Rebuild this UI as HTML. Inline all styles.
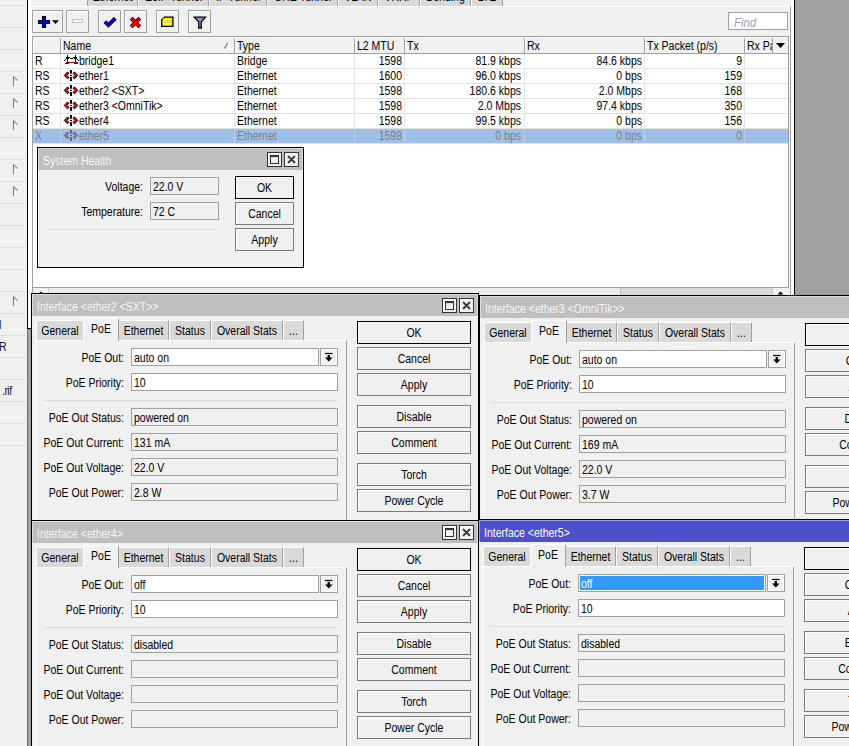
<!DOCTYPE html><html><head><meta charset="utf-8"><style>
*{margin:0;padding:0;box-sizing:content-box}
html,body{width:849px;height:746px;overflow:hidden;position:relative;background:#a0a0a0}
div{position:absolute}
.t{font-family:"Liberation Sans",sans-serif;font-size:12px;line-height:13px;white-space:pre;color:#000;height:13px;transform:scaleX(0.875)}
.btn{border:1px solid #777;background:#f0f0f0;box-shadow:inset 1px 1px 0 #fff}
</style></head><body>
<div style="left:0px;top:0px;width:27px;height:746px;background:#f0f0f0"></div>
<div style="left:0px;top:5px;width:25px;height:1px;background:#dedede"></div>
<div style="left:0px;top:27px;width:25px;height:1px;background:#dedede"></div>
<div style="left:0px;top:49px;width:25px;height:1px;background:#dedede"></div>
<div style="left:0px;top:71px;width:25px;height:1px;background:#dedede"></div>
<div style="left:0px;top:93px;width:25px;height:1px;background:#dedede"></div>
<div style="left:0px;top:115px;width:25px;height:1px;background:#dedede"></div>
<div style="left:0px;top:137px;width:25px;height:1px;background:#dedede"></div>
<div style="left:0px;top:159px;width:25px;height:1px;background:#dedede"></div>
<div style="left:0px;top:181px;width:25px;height:1px;background:#dedede"></div>
<div style="left:0px;top:203px;width:25px;height:1px;background:#dedede"></div>
<div style="left:0px;top:225px;width:25px;height:1px;background:#dedede"></div>
<div style="left:0px;top:247px;width:25px;height:1px;background:#dedede"></div>
<div style="left:0px;top:269px;width:25px;height:1px;background:#dedede"></div>
<div style="left:0px;top:291px;width:25px;height:1px;background:#dedede"></div>
<div style="left:0px;top:313px;width:25px;height:1px;background:#dedede"></div>
<div style="left:0px;top:335px;width:25px;height:1px;background:#dedede"></div>
<div style="left:0px;top:357px;width:25px;height:1px;background:#dedede"></div>
<div style="left:0px;top:379px;width:25px;height:1px;background:#dedede"></div>
<div style="left:0px;top:401px;width:25px;height:1px;background:#dedede"></div>
<div style="left:0px;top:423px;width:25px;height:1px;background:#dedede"></div>
<div style="left:0px;top:445px;width:25px;height:1px;background:#dedede"></div>
<svg style="position:absolute;left:12px;top:76px" width="8" height="11"><path d="M5.6 4.6 L1.6 9.2" stroke="#fff" stroke-width="1"/><path d="M1.5 0.3 V10 M1.5 0.6 L5.6 4.6" stroke="#808080" stroke-width="1.1"/></svg>
<svg style="position:absolute;left:12px;top:98px" width="8" height="11"><path d="M5.6 4.6 L1.6 9.2" stroke="#fff" stroke-width="1"/><path d="M1.5 0.3 V10 M1.5 0.6 L5.6 4.6" stroke="#808080" stroke-width="1.1"/></svg>
<svg style="position:absolute;left:12px;top:120px" width="8" height="11"><path d="M5.6 4.6 L1.6 9.2" stroke="#fff" stroke-width="1"/><path d="M1.5 0.3 V10 M1.5 0.6 L5.6 4.6" stroke="#808080" stroke-width="1.1"/></svg>
<svg style="position:absolute;left:12px;top:164px" width="8" height="11"><path d="M5.6 4.6 L1.6 9.2" stroke="#fff" stroke-width="1"/><path d="M1.5 0.3 V10 M1.5 0.6 L5.6 4.6" stroke="#808080" stroke-width="1.1"/></svg>
<svg style="position:absolute;left:12px;top:186px" width="8" height="11"><path d="M5.6 4.6 L1.6 9.2" stroke="#fff" stroke-width="1"/><path d="M1.5 0.3 V10 M1.5 0.6 L5.6 4.6" stroke="#808080" stroke-width="1.1"/></svg>
<svg style="position:absolute;left:12px;top:296px" width="8" height="11"><path d="M5.6 4.6 L1.6 9.2" stroke="#fff" stroke-width="1"/><path d="M1.5 0.3 V10 M1.5 0.6 L5.6 4.6" stroke="#808080" stroke-width="1.1"/></svg>
<div class="t" style="left:-1px;top:319px;transform-origin:0 0;color:#101040">l</div>
<div class="t" style="left:-1px;top:341px;transform-origin:0 0;color:#101040">R</div>
<div class="t" style="left:1.5px;top:385px;transform-origin:0 0;color:#101040;letter-spacing:-0.6px">.rif</div>
<div style="left:27px;top:0px;width:1px;height:329px;background:#000"></div>
<div style="left:27px;top:329px;width:1px;height:417px;background:#707070"></div>
<div style="left:28px;top:0px;width:766px;height:328px;background:#fff"></div>
<div style="left:794px;top:0px;width:1px;height:329px;background:#000"></div>
<div style="left:27px;top:328px;width:768px;height:1px;background:#000"></div>
<div style="left:31px;top:0px;width:760px;height:328px;background:#f0f0f0"></div>
<div style="left:87px;top:-10px;width:50px;height:16px;background:#d9d9d9;border-left:1px solid #a0a0a0"></div>
<div style="left:137px;top:-10px;width:1px;height:16px;background:#a0a0a0"></div>
<div class="t" style="left:37px;width:151px;text-align:center;top:-8.8px;transform-origin:50% 0;">Ethernet</div>
<div style="left:138px;top:-10px;width:70px;height:16px;background:#d9d9d9;border-left:1px solid #fff"></div>
<div style="left:208px;top:-10px;width:1px;height:16px;background:#a0a0a0"></div>
<div class="t" style="left:88px;width:171px;text-align:center;top:-8.8px;transform-origin:50% 0;">EoIP Tunnel</div>
<div style="left:209px;top:-10px;width:57px;height:16px;background:#d9d9d9;border-left:1px solid #fff"></div>
<div style="left:266px;top:-10px;width:1px;height:16px;background:#a0a0a0"></div>
<div class="t" style="left:159px;width:158px;text-align:center;top:-8.8px;transform-origin:50% 0;">IP Tunnel</div>
<div style="left:267px;top:-10px;width:70px;height:16px;background:#d9d9d9;border-left:1px solid #fff"></div>
<div style="left:337px;top:-10px;width:1px;height:16px;background:#a0a0a0"></div>
<div class="t" style="left:217px;width:171px;text-align:center;top:-8.8px;transform-origin:50% 0;">GRE Tunnel</div>
<div style="left:338px;top:-10px;width:39px;height:16px;background:#d9d9d9;border-left:1px solid #fff"></div>
<div style="left:377px;top:-10px;width:1px;height:16px;background:#a0a0a0"></div>
<div class="t" style="left:288px;width:140px;text-align:center;top:-8.8px;transform-origin:50% 0;">VLAN</div>
<div style="left:378px;top:-10px;width:41px;height:16px;background:#d9d9d9;border-left:1px solid #fff"></div>
<div style="left:419px;top:-10px;width:1px;height:16px;background:#a0a0a0"></div>
<div class="t" style="left:328px;width:142px;text-align:center;top:-8.8px;transform-origin:50% 0;">VRRP</div>
<div style="left:420px;top:-10px;width:50px;height:16px;background:#d9d9d9;border-left:1px solid #fff"></div>
<div style="left:470px;top:-10px;width:1px;height:16px;background:#a0a0a0"></div>
<div class="t" style="left:370px;width:151px;text-align:center;top:-8.8px;transform-origin:50% 0;">Bonding</div>
<div style="left:471px;top:-10px;width:31px;height:16px;background:#d9d9d9;border-left:1px solid #fff"></div>
<div style="left:502px;top:-10px;width:1px;height:16px;background:#a0a0a0"></div>
<div class="t" style="left:421px;width:132px;text-align:center;top:-8.8px;transform-origin:50% 0;">LTE</div>
<div style="left:31px;top:6px;width:759px;height:1px;background:#fff"></div>
<div style="left:790px;top:6px;width:1px;height:322px;background:#a0a0a0"></div>
<div style="left:31px;top:6px;width:1px;height:322px;background:#fff"></div>
<div class="btn" style="left:32px;top:10px;width:29px;height:21px;border-color:#a0a0a0"></div>
<div class="btn" style="left:66px;top:10px;width:21px;height:21px;border-color:#a0a0a0"></div>
<div class="btn" style="left:98px;top:10px;width:21px;height:21px;border-color:#a0a0a0"></div>
<div class="btn" style="left:124px;top:10px;width:21px;height:21px;border-color:#a0a0a0"></div>
<div class="btn" style="left:156px;top:10px;width:21px;height:21px;border-color:#a0a0a0"></div>
<div class="btn" style="left:188px;top:10px;width:21px;height:21px;border-color:#a0a0a0"></div>
<svg style="position:absolute;left:37px;top:15px" width="24" height="14"><path d="M5.5 1.5H8.5V5.5H12.5V8.5H8.5V12.5H5.5V8.5H1.5V5.5H5.5Z" fill="#0000ff" stroke="#000" stroke-width="1.1"/><path d="M15 5.3h7l-3.5 3.7z" fill="#000"/></svg>
<svg style="position:absolute;left:71px;top:18px" width="14" height="8"><rect x="1.5" y="1.5" width="10" height="3" fill="#fff" stroke="#c0c0c0"/></svg>
<svg style="position:absolute;left:103px;top:16px" width="14" height="12"><path d="M1.9 5.6 L5.4 9.1 L12.2 2.3" fill="none" stroke="#000" stroke-width="3.8"/><path d="M1.9 5.6 L5.4 9.1 L12.2 2.3" fill="none" stroke="#0000ff" stroke-width="2"/></svg>
<svg style="position:absolute;left:129px;top:16px" width="14" height="13"><path d="M2.2 2.2 L10.8 10.8 M10.8 2.2 L2.2 10.8" fill="none" stroke="#000" stroke-width="3.9"/><path d="M2.2 2.2 L10.8 10.8 M10.8 2.2 L2.2 10.8" fill="none" stroke="#ff0000" stroke-width="2.1"/></svg>
<svg style="position:absolute;left:160px;top:16px" width="16" height="12"><path d="M4.6 1.1h8.3v9.2h-11.2v-6.3z" fill="#ffff00" stroke="#000" stroke-width="1.3"/><path d="M6 4.3h2 M9.5 4.3h2 M4 6.3h2 M7 6.3h2 M10 6.3h2" stroke="#b8b8a0" stroke-width="1"/><circle cx="3.4" cy="3" r="0.8" fill="#ffff00"/></svg>
<svg style="position:absolute;left:193px;top:16px" width="14" height="14"><path d="M1.3 1.1h11.2l-4.2 4.6v6.4h-2.6v-6.4z" fill="#8c9cd0" stroke="#000" stroke-width="1.3"/></svg>
<div style="left:728px;top:12px;width:58px;height:16px;background:#fff;border:1px solid #a0a0a0"></div>
<div class="t" style="left:734px;top:16px;transform-origin:0 0;font-style:italic;color:#a0a0b8;font-size:13px">Find</div>
<div style="left:32px;top:36px;width:755px;height:258px;background:#fff;border:1px solid #a0a0a0"></div>
<div style="left:33px;top:37px;width:755px;height:16px;background:#f0f0f0"></div>
<div style="left:33px;top:53px;width:755px;height:1px;background:#a0a0a0"></div>
<div style="left:60px;top:37px;width:1px;height:16px;background:#a0a0a0"></div>
<div style="left:60px;top:54px;width:1px;height:90px;background:#e6e6e6"></div>
<div style="left:234px;top:37px;width:1px;height:16px;background:#a0a0a0"></div>
<div style="left:234px;top:54px;width:1px;height:90px;background:#e6e6e6"></div>
<div style="left:354px;top:37px;width:1px;height:16px;background:#a0a0a0"></div>
<div style="left:354px;top:54px;width:1px;height:90px;background:#e6e6e6"></div>
<div style="left:404px;top:37px;width:1px;height:16px;background:#a0a0a0"></div>
<div style="left:404px;top:54px;width:1px;height:90px;background:#e6e6e6"></div>
<div style="left:524px;top:37px;width:1px;height:16px;background:#a0a0a0"></div>
<div style="left:524px;top:54px;width:1px;height:90px;background:#e6e6e6"></div>
<div style="left:644px;top:37px;width:1px;height:16px;background:#a0a0a0"></div>
<div style="left:644px;top:54px;width:1px;height:90px;background:#e6e6e6"></div>
<div style="left:744px;top:37px;width:1px;height:16px;background:#a0a0a0"></div>
<div style="left:744px;top:54px;width:1px;height:90px;background:#e6e6e6"></div>
<div style="left:772px;top:37px;width:1px;height:16px;background:#a0a0a0"></div>
<div class="t" style="left:63px;top:40px;transform-origin:0 0;">Name</div>
<div class="t" style="left:237px;top:40px;transform-origin:0 0;">Type</div>
<div class="t" style="left:357px;top:40px;transform-origin:0 0;">L2 MTU</div>
<div class="t" style="left:407px;top:40px;transform-origin:0 0;">Tx</div>
<div class="t" style="left:527px;top:40px;transform-origin:0 0;">Rx</div>
<div class="t" style="left:647px;top:40px;transform-origin:0 0;">Tx Packet (p/s)</div>
<div style="left:744px;top:37px;width:28px;height:16px;overflow:hidden"><div class="t" style="left:3px;top:3px;transform-origin:0 0">Rx Packet</div></div>
<svg style="position:absolute;left:775px;top:42px" width="12" height="8"><path d="M1 1h9l-4.5 5z" fill="#000"/></svg>
<svg style="position:absolute;left:223px;top:42px" width="9" height="8"><path d="M4.6 1 L7.6 6.8 M1 7.2 H8" stroke="#fff" stroke-width="1.1"/><path d="M1.4 6.6 L4.6 1.2" stroke="#808080" stroke-width="1.3"/></svg>
<div style="left:33px;top:37px;width:755px;height:1px;background:#fff"></div>
<div style="left:33px;top:38px;width:1px;height:15px;background:#fff"></div>
<div style="left:61px;top:38px;width:1px;height:15px;background:#fff"></div>
<div style="left:235px;top:38px;width:1px;height:15px;background:#fff"></div>
<div style="left:355px;top:38px;width:1px;height:15px;background:#fff"></div>
<div style="left:405px;top:38px;width:1px;height:15px;background:#fff"></div>
<div style="left:525px;top:38px;width:1px;height:15px;background:#fff"></div>
<div style="left:645px;top:38px;width:1px;height:15px;background:#fff"></div>
<div style="left:745px;top:38px;width:1px;height:15px;background:#fff"></div>
<div style="left:33px;top:68px;width:755px;height:1px;background:#e0e0e0"></div>
<div class="t" style="left:35px;top:55px;transform-origin:0 0;">R</div>
<div class="t" style="left:79px;top:55px;transform-origin:0 0;">bridge1</div>
<div class="t" style="left:237px;top:55px;transform-origin:0 0;">Bridge</div>
<div class="t" style="left:102px;width:300px;text-align:right;top:55px;transform-origin:100% 0;">1598</div>
<div class="t" style="left:221px;width:300px;text-align:right;top:55px;transform-origin:100% 0;">81.9 kbps</div>
<div class="t" style="left:342px;width:300px;text-align:right;top:55px;transform-origin:100% 0;">84.6 kbps</div>
<div class="t" style="left:442px;width:300px;text-align:right;top:55px;transform-origin:100% 0;">9</div>
<svg style="position:absolute;left:62px;top:53px;" width="18" height="15" shape-rendering="crispEdges"><g fill="#000"><rect x="5" y="2" width="1" height="7"/><rect x="13" y="2" width="1" height="7"/><rect x="4" y="4" width="3" height="2"/><rect x="12" y="4" width="3" height="2"/><rect x="6" y="4" width="2" height="1"/><rect x="8" y="5" width="3" height="1"/><rect x="11" y="4" width="2" height="1"/><rect x="2" y="7" width="1" height="1"/><rect x="3" y="6" width="1" height="1"/><rect x="15" y="6" width="1" height="1"/><rect x="16" y="7" width="1" height="1"/></g><g fill="#900000"><rect x="4" y="9" width="12" height="1"/><rect x="3" y="10" width="4" height="1"/><rect x="12" y="10" width="4" height="1"/></g></svg>
<div style="left:33px;top:83px;width:755px;height:1px;background:#e0e0e0"></div>
<div class="t" style="left:35px;top:70px;transform-origin:0 0;">RS</div>
<div class="t" style="left:79px;top:70px;transform-origin:0 0;">ether1</div>
<div class="t" style="left:237px;top:70px;transform-origin:0 0;">Ethernet</div>
<div class="t" style="left:102px;width:300px;text-align:right;top:70px;transform-origin:100% 0;">1600</div>
<div class="t" style="left:221px;width:300px;text-align:right;top:70px;transform-origin:100% 0;">96.0 kbps</div>
<div class="t" style="left:342px;width:300px;text-align:right;top:70px;transform-origin:100% 0;">0 bps</div>
<div class="t" style="left:442px;width:300px;text-align:right;top:70px;transform-origin:100% 0;">159</div>
<svg style="position:absolute;left:63px;top:70px;" width="17" height="13"><path d="M7 0h2v3.7h-2z M7 5h2v1h-2z M7 7h2v4h-2z" fill="#000"/><path d="M1.2 5.4 L4.5 2 L6 3.3 L4 5.4 L6 7.5 L4.5 8.8 Z M14.8 5.4 L11.5 2 L10 3.3 L12 5.4 L10 7.5 L11.5 8.8 Z" fill="#ff0000" stroke="#000" stroke-width="1"/></svg>
<div style="left:33px;top:98px;width:755px;height:1px;background:#e0e0e0"></div>
<div class="t" style="left:35px;top:85px;transform-origin:0 0;">RS</div>
<div class="t" style="left:79px;top:85px;transform-origin:0 0;">ether2 &lt;SXT&gt;</div>
<div class="t" style="left:237px;top:85px;transform-origin:0 0;">Ethernet</div>
<div class="t" style="left:102px;width:300px;text-align:right;top:85px;transform-origin:100% 0;">1598</div>
<div class="t" style="left:221px;width:300px;text-align:right;top:85px;transform-origin:100% 0;">180.6 kbps</div>
<div class="t" style="left:342px;width:300px;text-align:right;top:85px;transform-origin:100% 0;">2.0 Mbps</div>
<div class="t" style="left:442px;width:300px;text-align:right;top:85px;transform-origin:100% 0;">168</div>
<svg style="position:absolute;left:63px;top:85px;" width="17" height="13"><path d="M7 0h2v3.7h-2z M7 5h2v1h-2z M7 7h2v4h-2z" fill="#000"/><path d="M1.2 5.4 L4.5 2 L6 3.3 L4 5.4 L6 7.5 L4.5 8.8 Z M14.8 5.4 L11.5 2 L10 3.3 L12 5.4 L10 7.5 L11.5 8.8 Z" fill="#ff0000" stroke="#000" stroke-width="1"/></svg>
<div style="left:33px;top:113px;width:755px;height:1px;background:#e0e0e0"></div>
<div class="t" style="left:35px;top:100px;transform-origin:0 0;">RS</div>
<div class="t" style="left:79px;top:100px;transform-origin:0 0;">ether3 &lt;OmniTik&gt;</div>
<div class="t" style="left:237px;top:100px;transform-origin:0 0;">Ethernet</div>
<div class="t" style="left:102px;width:300px;text-align:right;top:100px;transform-origin:100% 0;">1598</div>
<div class="t" style="left:221px;width:300px;text-align:right;top:100px;transform-origin:100% 0;">2.0 Mbps</div>
<div class="t" style="left:342px;width:300px;text-align:right;top:100px;transform-origin:100% 0;">97.4 kbps</div>
<div class="t" style="left:442px;width:300px;text-align:right;top:100px;transform-origin:100% 0;">350</div>
<svg style="position:absolute;left:63px;top:100px;" width="17" height="13"><path d="M7 0h2v3.7h-2z M7 5h2v1h-2z M7 7h2v4h-2z" fill="#000"/><path d="M1.2 5.4 L4.5 2 L6 3.3 L4 5.4 L6 7.5 L4.5 8.8 Z M14.8 5.4 L11.5 2 L10 3.3 L12 5.4 L10 7.5 L11.5 8.8 Z" fill="#ff0000" stroke="#000" stroke-width="1"/></svg>
<div style="left:33px;top:128px;width:755px;height:1px;background:#e0e0e0"></div>
<div class="t" style="left:35px;top:115px;transform-origin:0 0;">RS</div>
<div class="t" style="left:79px;top:115px;transform-origin:0 0;">ether4</div>
<div class="t" style="left:237px;top:115px;transform-origin:0 0;">Ethernet</div>
<div class="t" style="left:102px;width:300px;text-align:right;top:115px;transform-origin:100% 0;">1598</div>
<div class="t" style="left:221px;width:300px;text-align:right;top:115px;transform-origin:100% 0;">99.5 kbps</div>
<div class="t" style="left:342px;width:300px;text-align:right;top:115px;transform-origin:100% 0;">0 bps</div>
<div class="t" style="left:442px;width:300px;text-align:right;top:115px;transform-origin:100% 0;">156</div>
<svg style="position:absolute;left:63px;top:115px;" width="17" height="13"><path d="M7 0h2v3.7h-2z M7 5h2v1h-2z M7 7h2v4h-2z" fill="#000"/><path d="M1.2 5.4 L4.5 2 L6 3.3 L4 5.4 L6 7.5 L4.5 8.8 Z M14.8 5.4 L11.5 2 L10 3.3 L12 5.4 L10 7.5 L11.5 8.8 Z" fill="#ff0000" stroke="#000" stroke-width="1"/></svg>
<div style="left:33px;top:129px;width:755px;height:14px;background:#9dbfe9"></div>
<div style="left:60px;top:129px;width:1px;height:14px;background:#b8d0ee"></div>
<div style="left:234px;top:129px;width:1px;height:14px;background:#b8d0ee"></div>
<div style="left:354px;top:129px;width:1px;height:14px;background:#b8d0ee"></div>
<div style="left:404px;top:129px;width:1px;height:14px;background:#b8d0ee"></div>
<div style="left:524px;top:129px;width:1px;height:14px;background:#b8d0ee"></div>
<div style="left:644px;top:129px;width:1px;height:14px;background:#b8d0ee"></div>
<div style="left:744px;top:129px;width:1px;height:14px;background:#b8d0ee"></div>
<div style="left:33px;top:143px;width:755px;height:1px;background:#e0e0e0"></div>
<div class="t" style="left:35px;top:130px;transform-origin:0 0;color:#808080">X</div>
<div class="t" style="left:79px;top:130px;transform-origin:0 0;color:#808080">ether5</div>
<div class="t" style="left:237px;top:130px;transform-origin:0 0;color:#808080">Ethernet</div>
<div class="t" style="left:102px;width:300px;text-align:right;top:130px;transform-origin:100% 0;color:#808080">1598</div>
<div class="t" style="left:221px;width:300px;text-align:right;top:130px;transform-origin:100% 0;color:#808080">0 bps</div>
<div class="t" style="left:342px;width:300px;text-align:right;top:130px;transform-origin:100% 0;color:#808080">0 bps</div>
<div class="t" style="left:442px;width:300px;text-align:right;top:130px;transform-origin:100% 0;color:#808080">0</div>
<svg style="position:absolute;left:63px;top:130px;opacity:0.45;" width="17" height="13"><path d="M7 0h2v3.7h-2z M7 5h2v1h-2z M7 7h2v4h-2z" fill="#000"/><path d="M1.2 5.4 L4.5 2 L6 3.3 L4 5.4 L6 7.5 L4.5 8.8 Z M14.8 5.4 L11.5 2 L10 3.3 L12 5.4 L10 7.5 L11.5 8.8 Z" fill="#ff0000" stroke="#000" stroke-width="1"/></svg>
<div style="left:33px;top:287px;width:755px;height:8px;background:#ececec;border-top:1px solid #a0a0a0"></div>
<div style="left:33px;top:288px;width:15px;height:8px;background:#f0f0f0;border-right:1px solid #c8c8c8"></div>
<div style="left:620px;top:288px;width:151px;height:8px;background:#d9d9d9;border-left:1px solid #c0c0c0"></div>
<div style="left:772px;top:288px;width:16px;height:8px;background:#f0f0f0;border-left:1px solid #c8c8c8"></div>
<svg style="position:absolute;left:37px;top:291px" width="8" height="4"><path d="M4 0.6L7 3.6H1z" fill="#000"/></svg>
<svg style="position:absolute;left:776px;top:291px" width="8" height="4"><path d="M4.5 0.6L7.5 3.6H1.5z" fill="#000"/></svg>
<div style="left:37px;top:147px;width:265px;height:119px;background:#f0f0f0;border:1px solid #000"></div>
<div style="left:38px;top:148px;width:265px;height:22px;background:#bfbfbf;box-shadow:inset 1px 1px 0 rgba(255,255,255,0.45),inset -1px 0 0 rgba(255,255,255,0.45)"></div>
<div class="t" style="left:43px;top:155px;transform-origin:0 0;color:#f4f4f4">System Health</div>
<div style="left:267px;top:152px;width:13px;height:13px;border:1px solid #333;background:#f0f0f0;box-shadow:inset 1px 1px 0 #fff"></div>
<svg style="position:absolute;left:267px;top:152px" width="15" height="15"><rect x="3.5" y="3.5" width="8" height="8" fill="none" stroke="#333"/><path d="M3 4.3h9" stroke="#333" stroke-width="1.6"/></svg>
<div style="left:284px;top:152px;width:13px;height:13px;border:1px solid #333;background:#f0f0f0;box-shadow:inset 1px 1px 0 #fff"></div>
<svg style="position:absolute;left:284px;top:152px" width="15" height="15"><path d="M4.6 4.6L10.4 10.4M10.4 4.6L4.6 10.4" stroke="#333" stroke-width="2" stroke-linecap="round"/></svg>
<div class="t" style="left:-157px;width:300px;text-align:right;top:181px;transform-origin:100% 0;">Voltage:</div>
<div class="t" style="left:-157px;width:300px;text-align:right;top:206px;transform-origin:100% 0;">Temperature:</div>
<div style="left:150px;top:177px;width:67px;height:16px;background:#f0f0f0;border:1px solid #a0a0a0"></div>
<div class="t" style="left:153px;top:181px;transform-origin:0 0;">22.0 V</div>
<div style="left:150px;top:202px;width:67px;height:16px;background:#f0f0f0;border:1px solid #a0a0a0"></div>
<div class="t" style="left:153px;top:206px;transform-origin:0 0;">72 C</div>
<div style="left:47px;top:229px;width:171px;height:1px;background:#dcdcdc"></div>
<div class="btn" style="left:235px;top:176px;width:57px;height:21px;border-color:#000"></div>
<div class="t" style="left:185px;width:159px;text-align:center;top:182px;transform-origin:50% 0;">OK</div>
<div class="btn" style="left:235px;top:202px;width:57px;height:21px;border-color:#7a7a7a"></div>
<div class="t" style="left:185px;width:159px;text-align:center;top:208px;transform-origin:50% 0;">Cancel</div>
<div class="btn" style="left:235px;top:228px;width:57px;height:21px;border-color:#7a7a7a"></div>
<div class="t" style="left:185px;width:159px;text-align:center;top:234px;transform-origin:50% 0;">Apply</div>
<div style="left:479px;top:295px;width:446px;height:258px;background:#f0f0f0;border:1px solid #000"></div>
<div style="left:480px;top:296px;width:446px;height:22px;background:#bfbfbf;box-shadow:inset 1px 1px 0 rgba(255,255,255,0.45),inset -1px 0 0 rgba(255,255,255,0.45)"></div>
<div class="t" style="left:485px;top:303px;transform-origin:0 0;color:#f4f4f4">Interface &lt;ether3 &lt;OmniTik&gt;&gt;</div>
<div style="left:890px;top:300px;width:13px;height:13px;border:1px solid #333;background:#f0f0f0;box-shadow:inset 1px 1px 0 #fff"></div>
<svg style="position:absolute;left:890px;top:300px" width="15" height="15"><rect x="3.5" y="3.5" width="8" height="8" fill="none" stroke="#333"/><path d="M3 4.3h9" stroke="#333" stroke-width="1.6"/></svg>
<div style="left:907px;top:300px;width:13px;height:13px;border:1px solid #333;background:#f0f0f0;box-shadow:inset 1px 1px 0 #fff"></div>
<svg style="position:absolute;left:907px;top:300px" width="15" height="15"><path d="M4.6 4.6L10.4 10.4M10.4 4.6L4.6 10.4" stroke="#333" stroke-width="2" stroke-linecap="round"/></svg>
<div style="left:483px;top:342px;width:310px;height:300px;border-left:1px solid #fff;border-top:1px solid #fff;border-right:1px solid #a0a0a0"></div>
<div style="left:484px;top:322px;width:46px;height:19px;background:#d9d9d9;border-top:1px solid #fff;border-left:1px solid #fff;border-right:1px solid #a0a0a0"></div>
<div class="t" style="left:434px;width:148px;text-align:center;top:327px;transform-origin:50% 0;">General</div>
<div style="left:566px;top:322px;width:49px;height:19px;background:#d9d9d9;border-top:1px solid #fff;border-left:1px solid #fff;border-right:1px solid #a0a0a0"></div>
<div class="t" style="left:516px;width:151px;text-align:center;top:327px;transform-origin:50% 0;">Ethernet</div>
<div style="left:617px;top:322px;width:40px;height:19px;background:#d9d9d9;border-top:1px solid #fff;border-left:1px solid #fff;border-right:1px solid #a0a0a0"></div>
<div class="t" style="left:567px;width:142px;text-align:center;top:327px;transform-origin:50% 0;">Status</div>
<div style="left:659px;top:322px;width:70px;height:19px;background:#d9d9d9;border-top:1px solid #fff;border-left:1px solid #fff;border-right:1px solid #a0a0a0"></div>
<div class="t" style="left:609px;width:172px;text-align:center;top:327px;transform-origin:50% 0;">Overall Stats</div>
<div style="left:731px;top:322px;width:19px;height:19px;background:#d9d9d9;border-top:1px solid #fff;border-left:1px solid #fff;border-right:1px solid #a0a0a0"></div>
<div class="t" style="left:681px;width:121px;text-align:center;top:327px;transform-origin:50% 0;">...</div>
<div style="left:531px;top:320px;width:34px;height:22px;background:#f0f0f0;border-top:1px solid #fff;border-left:1px solid #fff;border-right:1px solid #a0a0a0"></div>
<div class="t" style="left:481px;width:136px;text-align:center;top:325px;transform-origin:50% 0;">PoE</div>
<div class="t" style="left:272px;width:300px;text-align:right;top:354px;transform-origin:100% 0;">PoE Out:</div>
<div style="left:579px;top:350px;width:186px;height:16px;background:#fff;border:1px solid #a0a0a0"></div>
<div class="t" style="left:582px;top:354px;transform-origin:0 0;">auto on</div>
<div style="left:768px;top:350px;width:16px;height:16px;background:#f0f0f0;border:1px solid #a0a0a0;box-shadow:inset 0 0 0 1px #fff"></div>
<svg style="position:absolute;left:768px;top:350px" width="18" height="18"><path d="M5 5.5h7.5" stroke="#000" stroke-width="1.2"/><path d="M7.6 7h2.4v2.4h2.6l-3.8 4.1l-3.8-4.1h2.6z" fill="#000"/></svg>
<div class="t" style="left:272px;width:300px;text-align:right;top:379px;transform-origin:100% 0;">PoE Priority:</div>
<div style="left:579px;top:375px;width:205px;height:16px;background:#fff;border:1px solid #a0a0a0"></div>
<div class="t" style="left:582px;top:379px;transform-origin:0 0;">10</div>
<div class="t" style="left:272px;width:300px;text-align:right;top:414px;transform-origin:100% 0;">PoE Out Status:</div>
<div style="left:579px;top:410px;width:205px;height:16px;background:#f0f0f0;border:1px solid #a0a0a0"></div>
<div class="t" style="left:582px;top:414px;transform-origin:0 0;">powered on</div>
<div class="t" style="left:272px;width:300px;text-align:right;top:439px;transform-origin:100% 0;">PoE Out Current:</div>
<div style="left:579px;top:435px;width:205px;height:16px;background:#f0f0f0;border:1px solid #a0a0a0"></div>
<div class="t" style="left:582px;top:439px;transform-origin:0 0;">169 mA</div>
<div class="t" style="left:272px;width:300px;text-align:right;top:464px;transform-origin:100% 0;">PoE Out Voltage:</div>
<div style="left:579px;top:460px;width:205px;height:16px;background:#f0f0f0;border:1px solid #a0a0a0"></div>
<div class="t" style="left:582px;top:464px;transform-origin:0 0;">22.0 V</div>
<div class="t" style="left:272px;width:300px;text-align:right;top:489px;transform-origin:100% 0;">PoE Out Power:</div>
<div style="left:579px;top:485px;width:205px;height:16px;background:#f0f0f0;border:1px solid #a0a0a0"></div>
<div class="t" style="left:582px;top:489px;transform-origin:0 0;">3.7 W</div>
<div style="left:491px;top:402px;width:295px;height:1px;background:#dcdcdc"></div>
<div class="btn" style="left:805px;top:323px;width:112px;height:21px;border-color:#000"></div>
<div class="t" style="left:755px;width:214px;text-align:center;top:329px;transform-origin:50% 0;">OK</div>
<div class="btn" style="left:805px;top:349px;width:112px;height:21px;border-color:#7a7a7a"></div>
<div class="t" style="left:755px;width:214px;text-align:center;top:355px;transform-origin:50% 0;">Cancel</div>
<div class="btn" style="left:805px;top:375px;width:112px;height:21px;border-color:#7a7a7a"></div>
<div class="t" style="left:755px;width:214px;text-align:center;top:381px;transform-origin:50% 0;">Apply</div>
<div class="btn" style="left:805px;top:407px;width:112px;height:21px;border-color:#7a7a7a"></div>
<div class="t" style="left:755px;width:214px;text-align:center;top:413px;transform-origin:50% 0;">Disable</div>
<div class="btn" style="left:805px;top:433px;width:112px;height:21px;border-color:#7a7a7a"></div>
<div class="t" style="left:755px;width:214px;text-align:center;top:439px;transform-origin:50% 0;">Comment</div>
<div class="btn" style="left:805px;top:465px;width:112px;height:21px;border-color:#7a7a7a"></div>
<div class="t" style="left:755px;width:214px;text-align:center;top:471px;transform-origin:50% 0;">Torch</div>
<div class="btn" style="left:805px;top:491px;width:112px;height:21px;border-color:#7a7a7a"></div>
<div class="t" style="left:755px;width:214px;text-align:center;top:497px;transform-origin:50% 0;">Power Cycle</div>
<div style="left:31px;top:293px;width:446px;height:226px;background:#f0f0f0;border:1px solid #000"></div>
<div style="left:32px;top:294px;width:446px;height:22px;background:#bfbfbf;box-shadow:inset 1px 1px 0 rgba(255,255,255,0.45),inset -1px 0 0 rgba(255,255,255,0.45)"></div>
<div class="t" style="left:37px;top:301px;transform-origin:0 0;color:#f4f4f4">Interface &lt;ether2 &lt;SXT&gt;&gt;</div>
<div style="left:442px;top:298px;width:13px;height:13px;border:1px solid #333;background:#f0f0f0;box-shadow:inset 1px 1px 0 #fff"></div>
<svg style="position:absolute;left:442px;top:298px" width="15" height="15"><rect x="3.5" y="3.5" width="8" height="8" fill="none" stroke="#333"/><path d="M3 4.3h9" stroke="#333" stroke-width="1.6"/></svg>
<div style="left:459px;top:298px;width:13px;height:13px;border:1px solid #333;background:#f0f0f0;box-shadow:inset 1px 1px 0 #fff"></div>
<svg style="position:absolute;left:459px;top:298px" width="15" height="15"><path d="M4.6 4.6L10.4 10.4M10.4 4.6L4.6 10.4" stroke="#333" stroke-width="2" stroke-linecap="round"/></svg>
<div style="left:35px;top:340px;width:310px;height:300px;border-left:1px solid #fff;border-top:1px solid #fff;border-right:1px solid #a0a0a0"></div>
<div style="left:36px;top:320px;width:46px;height:19px;background:#d9d9d9;border-top:1px solid #fff;border-left:1px solid #fff;border-right:1px solid #a0a0a0"></div>
<div class="t" style="left:-14px;width:148px;text-align:center;top:325px;transform-origin:50% 0;">General</div>
<div style="left:118px;top:320px;width:49px;height:19px;background:#d9d9d9;border-top:1px solid #fff;border-left:1px solid #fff;border-right:1px solid #a0a0a0"></div>
<div class="t" style="left:68px;width:151px;text-align:center;top:325px;transform-origin:50% 0;">Ethernet</div>
<div style="left:169px;top:320px;width:40px;height:19px;background:#d9d9d9;border-top:1px solid #fff;border-left:1px solid #fff;border-right:1px solid #a0a0a0"></div>
<div class="t" style="left:119px;width:142px;text-align:center;top:325px;transform-origin:50% 0;">Status</div>
<div style="left:211px;top:320px;width:70px;height:19px;background:#d9d9d9;border-top:1px solid #fff;border-left:1px solid #fff;border-right:1px solid #a0a0a0"></div>
<div class="t" style="left:161px;width:172px;text-align:center;top:325px;transform-origin:50% 0;">Overall Stats</div>
<div style="left:283px;top:320px;width:19px;height:19px;background:#d9d9d9;border-top:1px solid #fff;border-left:1px solid #fff;border-right:1px solid #a0a0a0"></div>
<div class="t" style="left:233px;width:121px;text-align:center;top:325px;transform-origin:50% 0;">...</div>
<div style="left:83px;top:318px;width:34px;height:22px;background:#f0f0f0;border-top:1px solid #fff;border-left:1px solid #fff;border-right:1px solid #a0a0a0"></div>
<div class="t" style="left:33px;width:136px;text-align:center;top:323px;transform-origin:50% 0;">PoE</div>
<div class="t" style="left:-176px;width:300px;text-align:right;top:352px;transform-origin:100% 0;">PoE Out:</div>
<div style="left:131px;top:348px;width:186px;height:16px;background:#fff;border:1px solid #a0a0a0"></div>
<div class="t" style="left:134px;top:352px;transform-origin:0 0;">auto on</div>
<div style="left:320px;top:348px;width:16px;height:16px;background:#f0f0f0;border:1px solid #a0a0a0;box-shadow:inset 0 0 0 1px #fff"></div>
<svg style="position:absolute;left:320px;top:348px" width="18" height="18"><path d="M5 5.5h7.5" stroke="#000" stroke-width="1.2"/><path d="M7.6 7h2.4v2.4h2.6l-3.8 4.1l-3.8-4.1h2.6z" fill="#000"/></svg>
<div class="t" style="left:-176px;width:300px;text-align:right;top:377px;transform-origin:100% 0;">PoE Priority:</div>
<div style="left:131px;top:373px;width:205px;height:16px;background:#fff;border:1px solid #a0a0a0"></div>
<div class="t" style="left:134px;top:377px;transform-origin:0 0;">10</div>
<div class="t" style="left:-176px;width:300px;text-align:right;top:412px;transform-origin:100% 0;">PoE Out Status:</div>
<div style="left:131px;top:408px;width:205px;height:16px;background:#f0f0f0;border:1px solid #a0a0a0"></div>
<div class="t" style="left:134px;top:412px;transform-origin:0 0;">powered on</div>
<div class="t" style="left:-176px;width:300px;text-align:right;top:437px;transform-origin:100% 0;">PoE Out Current:</div>
<div style="left:131px;top:433px;width:205px;height:16px;background:#f0f0f0;border:1px solid #a0a0a0"></div>
<div class="t" style="left:134px;top:437px;transform-origin:0 0;">131 mA</div>
<div class="t" style="left:-176px;width:300px;text-align:right;top:462px;transform-origin:100% 0;">PoE Out Voltage:</div>
<div style="left:131px;top:458px;width:205px;height:16px;background:#f0f0f0;border:1px solid #a0a0a0"></div>
<div class="t" style="left:134px;top:462px;transform-origin:0 0;">22.0 V</div>
<div class="t" style="left:-176px;width:300px;text-align:right;top:487px;transform-origin:100% 0;">PoE Out Power:</div>
<div style="left:131px;top:483px;width:205px;height:16px;background:#f0f0f0;border:1px solid #a0a0a0"></div>
<div class="t" style="left:134px;top:487px;transform-origin:0 0;">2.8 W</div>
<div style="left:43px;top:400px;width:295px;height:1px;background:#dcdcdc"></div>
<div class="btn" style="left:357px;top:321px;width:112px;height:21px;border-color:#000"></div>
<div class="t" style="left:307px;width:214px;text-align:center;top:327px;transform-origin:50% 0;">OK</div>
<div class="btn" style="left:357px;top:347px;width:112px;height:21px;border-color:#7a7a7a"></div>
<div class="t" style="left:307px;width:214px;text-align:center;top:353px;transform-origin:50% 0;">Cancel</div>
<div class="btn" style="left:357px;top:373px;width:112px;height:21px;border-color:#7a7a7a"></div>
<div class="t" style="left:307px;width:214px;text-align:center;top:379px;transform-origin:50% 0;">Apply</div>
<div class="btn" style="left:357px;top:405px;width:112px;height:21px;border-color:#7a7a7a"></div>
<div class="t" style="left:307px;width:214px;text-align:center;top:411px;transform-origin:50% 0;">Disable</div>
<div class="btn" style="left:357px;top:431px;width:112px;height:21px;border-color:#7a7a7a"></div>
<div class="t" style="left:307px;width:214px;text-align:center;top:437px;transform-origin:50% 0;">Comment</div>
<div class="btn" style="left:357px;top:463px;width:112px;height:21px;border-color:#7a7a7a"></div>
<div class="t" style="left:307px;width:214px;text-align:center;top:469px;transform-origin:50% 0;">Torch</div>
<div class="btn" style="left:357px;top:489px;width:112px;height:21px;border-color:#7a7a7a"></div>
<div class="t" style="left:307px;width:214px;text-align:center;top:495px;transform-origin:50% 0;">Power Cycle</div>
<div style="left:31px;top:520px;width:446px;height:258px;background:#f0f0f0;border:1px solid #000"></div>
<div style="left:32px;top:521px;width:446px;height:22px;background:#bfbfbf;box-shadow:inset 1px 1px 0 rgba(255,255,255,0.45),inset -1px 0 0 rgba(255,255,255,0.45)"></div>
<div class="t" style="left:37px;top:528px;transform-origin:0 0;color:#f4f4f4">Interface &lt;ether4&gt;</div>
<div style="left:442px;top:525px;width:13px;height:13px;border:1px solid #333;background:#f0f0f0;box-shadow:inset 1px 1px 0 #fff"></div>
<svg style="position:absolute;left:442px;top:525px" width="15" height="15"><rect x="3.5" y="3.5" width="8" height="8" fill="none" stroke="#333"/><path d="M3 4.3h9" stroke="#333" stroke-width="1.6"/></svg>
<div style="left:459px;top:525px;width:13px;height:13px;border:1px solid #333;background:#f0f0f0;box-shadow:inset 1px 1px 0 #fff"></div>
<svg style="position:absolute;left:459px;top:525px" width="15" height="15"><path d="M4.6 4.6L10.4 10.4M10.4 4.6L4.6 10.4" stroke="#333" stroke-width="2" stroke-linecap="round"/></svg>
<div style="left:35px;top:567px;width:310px;height:300px;border-left:1px solid #fff;border-top:1px solid #fff;border-right:1px solid #a0a0a0"></div>
<div style="left:36px;top:547px;width:46px;height:19px;background:#d9d9d9;border-top:1px solid #fff;border-left:1px solid #fff;border-right:1px solid #a0a0a0"></div>
<div class="t" style="left:-14px;width:148px;text-align:center;top:552px;transform-origin:50% 0;">General</div>
<div style="left:118px;top:547px;width:49px;height:19px;background:#d9d9d9;border-top:1px solid #fff;border-left:1px solid #fff;border-right:1px solid #a0a0a0"></div>
<div class="t" style="left:68px;width:151px;text-align:center;top:552px;transform-origin:50% 0;">Ethernet</div>
<div style="left:169px;top:547px;width:40px;height:19px;background:#d9d9d9;border-top:1px solid #fff;border-left:1px solid #fff;border-right:1px solid #a0a0a0"></div>
<div class="t" style="left:119px;width:142px;text-align:center;top:552px;transform-origin:50% 0;">Status</div>
<div style="left:211px;top:547px;width:70px;height:19px;background:#d9d9d9;border-top:1px solid #fff;border-left:1px solid #fff;border-right:1px solid #a0a0a0"></div>
<div class="t" style="left:161px;width:172px;text-align:center;top:552px;transform-origin:50% 0;">Overall Stats</div>
<div style="left:283px;top:547px;width:19px;height:19px;background:#d9d9d9;border-top:1px solid #fff;border-left:1px solid #fff;border-right:1px solid #a0a0a0"></div>
<div class="t" style="left:233px;width:121px;text-align:center;top:552px;transform-origin:50% 0;">...</div>
<div style="left:83px;top:545px;width:34px;height:22px;background:#f0f0f0;border-top:1px solid #fff;border-left:1px solid #fff;border-right:1px solid #a0a0a0"></div>
<div class="t" style="left:33px;width:136px;text-align:center;top:550px;transform-origin:50% 0;">PoE</div>
<div class="t" style="left:-176px;width:300px;text-align:right;top:579px;transform-origin:100% 0;">PoE Out:</div>
<div style="left:131px;top:575px;width:186px;height:16px;background:#fff;border:1px solid #a0a0a0"></div>
<div class="t" style="left:134px;top:579px;transform-origin:0 0;">off</div>
<div style="left:320px;top:575px;width:16px;height:16px;background:#f0f0f0;border:1px solid #a0a0a0;box-shadow:inset 0 0 0 1px #fff"></div>
<svg style="position:absolute;left:320px;top:575px" width="18" height="18"><path d="M5 5.5h7.5" stroke="#000" stroke-width="1.2"/><path d="M7.6 7h2.4v2.4h2.6l-3.8 4.1l-3.8-4.1h2.6z" fill="#000"/></svg>
<div class="t" style="left:-176px;width:300px;text-align:right;top:604px;transform-origin:100% 0;">PoE Priority:</div>
<div style="left:131px;top:600px;width:205px;height:16px;background:#fff;border:1px solid #a0a0a0"></div>
<div class="t" style="left:134px;top:604px;transform-origin:0 0;">10</div>
<div class="t" style="left:-176px;width:300px;text-align:right;top:639px;transform-origin:100% 0;">PoE Out Status:</div>
<div style="left:131px;top:635px;width:205px;height:16px;background:#f0f0f0;border:1px solid #a0a0a0"></div>
<div class="t" style="left:134px;top:639px;transform-origin:0 0;">disabled</div>
<div class="t" style="left:-176px;width:300px;text-align:right;top:664px;transform-origin:100% 0;">PoE Out Current:</div>
<div style="left:131px;top:660px;width:205px;height:16px;background:#f0f0f0;border:1px solid #a0a0a0"></div>
<div class="t" style="left:134px;top:664px;transform-origin:0 0;"></div>
<div class="t" style="left:-176px;width:300px;text-align:right;top:689px;transform-origin:100% 0;">PoE Out Voltage:</div>
<div style="left:131px;top:685px;width:205px;height:16px;background:#f0f0f0;border:1px solid #a0a0a0"></div>
<div class="t" style="left:134px;top:689px;transform-origin:0 0;"></div>
<div class="t" style="left:-176px;width:300px;text-align:right;top:714px;transform-origin:100% 0;">PoE Out Power:</div>
<div style="left:131px;top:710px;width:205px;height:16px;background:#f0f0f0;border:1px solid #a0a0a0"></div>
<div class="t" style="left:134px;top:714px;transform-origin:0 0;"></div>
<div style="left:43px;top:627px;width:295px;height:1px;background:#dcdcdc"></div>
<div class="btn" style="left:357px;top:548px;width:112px;height:21px;border-color:#000"></div>
<div class="t" style="left:307px;width:214px;text-align:center;top:554px;transform-origin:50% 0;">OK</div>
<div class="btn" style="left:357px;top:574px;width:112px;height:21px;border-color:#7a7a7a"></div>
<div class="t" style="left:307px;width:214px;text-align:center;top:580px;transform-origin:50% 0;">Cancel</div>
<div class="btn" style="left:357px;top:600px;width:112px;height:21px;border-color:#7a7a7a"></div>
<div class="t" style="left:307px;width:214px;text-align:center;top:606px;transform-origin:50% 0;">Apply</div>
<div class="btn" style="left:357px;top:632px;width:112px;height:21px;border-color:#7a7a7a"></div>
<div class="t" style="left:307px;width:214px;text-align:center;top:638px;transform-origin:50% 0;">Disable</div>
<div class="btn" style="left:357px;top:658px;width:112px;height:21px;border-color:#7a7a7a"></div>
<div class="t" style="left:307px;width:214px;text-align:center;top:664px;transform-origin:50% 0;">Comment</div>
<div class="btn" style="left:357px;top:690px;width:112px;height:21px;border-color:#7a7a7a"></div>
<div class="t" style="left:307px;width:214px;text-align:center;top:696px;transform-origin:50% 0;">Torch</div>
<div class="btn" style="left:357px;top:716px;width:112px;height:21px;border-color:#7a7a7a"></div>
<div class="t" style="left:307px;width:214px;text-align:center;top:722px;transform-origin:50% 0;">Power Cycle</div>
<div style="left:478px;top:519px;width:446px;height:258px;background:#f0f0f0;border:1px solid #000"></div>
<div style="left:479px;top:520px;width:446px;height:22px;background:#4d50cc;box-shadow:inset 1px 1px 0 rgba(255,255,255,0.45),inset -1px 0 0 rgba(255,255,255,0.45)"></div>
<div class="t" style="left:484px;top:527px;transform-origin:0 0;color:#fff">Interface &lt;ether5&gt;</div>
<div style="left:889px;top:524px;width:13px;height:13px;border:1px solid #333;background:#f0f0f0;box-shadow:inset 1px 1px 0 #fff"></div>
<svg style="position:absolute;left:889px;top:524px" width="15" height="15"><rect x="3.5" y="3.5" width="8" height="8" fill="none" stroke="#333"/><path d="M3 4.3h9" stroke="#333" stroke-width="1.6"/></svg>
<div style="left:906px;top:524px;width:13px;height:13px;border:1px solid #333;background:#f0f0f0;box-shadow:inset 1px 1px 0 #fff"></div>
<svg style="position:absolute;left:906px;top:524px" width="15" height="15"><path d="M4.6 4.6L10.4 10.4M10.4 4.6L4.6 10.4" stroke="#333" stroke-width="2" stroke-linecap="round"/></svg>
<div style="left:482px;top:566px;width:310px;height:300px;border-left:1px solid #fff;border-top:1px solid #fff;border-right:1px solid #a0a0a0"></div>
<div style="left:483px;top:546px;width:46px;height:19px;background:#d9d9d9;border-top:1px solid #fff;border-left:1px solid #fff;border-right:1px solid #a0a0a0"></div>
<div class="t" style="left:433px;width:148px;text-align:center;top:551px;transform-origin:50% 0;">General</div>
<div style="left:565px;top:546px;width:49px;height:19px;background:#d9d9d9;border-top:1px solid #fff;border-left:1px solid #fff;border-right:1px solid #a0a0a0"></div>
<div class="t" style="left:515px;width:151px;text-align:center;top:551px;transform-origin:50% 0;">Ethernet</div>
<div style="left:616px;top:546px;width:40px;height:19px;background:#d9d9d9;border-top:1px solid #fff;border-left:1px solid #fff;border-right:1px solid #a0a0a0"></div>
<div class="t" style="left:566px;width:142px;text-align:center;top:551px;transform-origin:50% 0;">Status</div>
<div style="left:658px;top:546px;width:70px;height:19px;background:#d9d9d9;border-top:1px solid #fff;border-left:1px solid #fff;border-right:1px solid #a0a0a0"></div>
<div class="t" style="left:608px;width:172px;text-align:center;top:551px;transform-origin:50% 0;">Overall Stats</div>
<div style="left:730px;top:546px;width:19px;height:19px;background:#d9d9d9;border-top:1px solid #fff;border-left:1px solid #fff;border-right:1px solid #a0a0a0"></div>
<div class="t" style="left:680px;width:121px;text-align:center;top:551px;transform-origin:50% 0;">...</div>
<div style="left:530px;top:544px;width:34px;height:22px;background:#f0f0f0;border-top:1px solid #fff;border-left:1px solid #fff;border-right:1px solid #a0a0a0"></div>
<div class="t" style="left:480px;width:136px;text-align:center;top:549px;transform-origin:50% 0;">PoE</div>
<div class="t" style="left:271px;width:300px;text-align:right;top:578px;transform-origin:100% 0;">PoE Out:</div>
<div style="left:578px;top:574px;width:186px;height:16px;background:#fff;border:1px solid #a0a0a0"></div>
<div style="left:580px;top:576px;width:184px;height:14px;background:#3399ff"></div>
<div class="t" style="left:581px;top:578px;transform-origin:0 0;color:#fff">off</div>
<div style="left:767px;top:574px;width:16px;height:16px;background:#f0f0f0;border:1px solid #a0a0a0;box-shadow:inset 0 0 0 1px #fff"></div>
<svg style="position:absolute;left:767px;top:574px" width="18" height="18"><path d="M5 5.5h7.5" stroke="#000" stroke-width="1.2"/><path d="M7.6 7h2.4v2.4h2.6l-3.8 4.1l-3.8-4.1h2.6z" fill="#000"/></svg>
<div class="t" style="left:271px;width:300px;text-align:right;top:603px;transform-origin:100% 0;">PoE Priority:</div>
<div style="left:578px;top:599px;width:205px;height:16px;background:#fff;border:1px solid #a0a0a0"></div>
<div class="t" style="left:581px;top:603px;transform-origin:0 0;">10</div>
<div class="t" style="left:271px;width:300px;text-align:right;top:638px;transform-origin:100% 0;">PoE Out Status:</div>
<div style="left:578px;top:634px;width:205px;height:16px;background:#f0f0f0;border:1px solid #a0a0a0"></div>
<div class="t" style="left:581px;top:638px;transform-origin:0 0;">disabled</div>
<div class="t" style="left:271px;width:300px;text-align:right;top:663px;transform-origin:100% 0;">PoE Out Current:</div>
<div style="left:578px;top:659px;width:205px;height:16px;background:#f0f0f0;border:1px solid #a0a0a0"></div>
<div class="t" style="left:581px;top:663px;transform-origin:0 0;"></div>
<div class="t" style="left:271px;width:300px;text-align:right;top:688px;transform-origin:100% 0;">PoE Out Voltage:</div>
<div style="left:578px;top:684px;width:205px;height:16px;background:#f0f0f0;border:1px solid #a0a0a0"></div>
<div class="t" style="left:581px;top:688px;transform-origin:0 0;"></div>
<div class="t" style="left:271px;width:300px;text-align:right;top:713px;transform-origin:100% 0;">PoE Out Power:</div>
<div style="left:578px;top:709px;width:205px;height:16px;background:#f0f0f0;border:1px solid #a0a0a0"></div>
<div class="t" style="left:581px;top:713px;transform-origin:0 0;"></div>
<div style="left:490px;top:626px;width:295px;height:1px;background:#dcdcdc"></div>
<div class="btn" style="left:804px;top:547px;width:112px;height:21px;border-color:#000"></div>
<div class="t" style="left:754px;width:214px;text-align:center;top:553px;transform-origin:50% 0;">OK</div>
<div class="btn" style="left:804px;top:573px;width:112px;height:21px;border-color:#7a7a7a"></div>
<div class="t" style="left:754px;width:214px;text-align:center;top:579px;transform-origin:50% 0;">Cancel</div>
<div class="btn" style="left:804px;top:599px;width:112px;height:21px;border-color:#7a7a7a"></div>
<div class="t" style="left:754px;width:214px;text-align:center;top:605px;transform-origin:50% 0;">Apply</div>
<div class="btn" style="left:804px;top:631px;width:112px;height:21px;border-color:#7a7a7a"></div>
<div class="t" style="left:754px;width:214px;text-align:center;top:637px;transform-origin:50% 0;">Enable</div>
<div class="btn" style="left:804px;top:657px;width:112px;height:21px;border-color:#7a7a7a"></div>
<div class="t" style="left:754px;width:214px;text-align:center;top:663px;transform-origin:50% 0;">Comment</div>
<div class="btn" style="left:804px;top:689px;width:112px;height:21px;border-color:#7a7a7a"></div>
<div class="t" style="left:754px;width:214px;text-align:center;top:695px;transform-origin:50% 0;">Torch</div>
<div class="btn" style="left:804px;top:715px;width:112px;height:21px;border-color:#7a7a7a"></div>
<div class="t" style="left:754px;width:214px;text-align:center;top:721px;transform-origin:50% 0;">Power Cycle</div>
</body></html>
